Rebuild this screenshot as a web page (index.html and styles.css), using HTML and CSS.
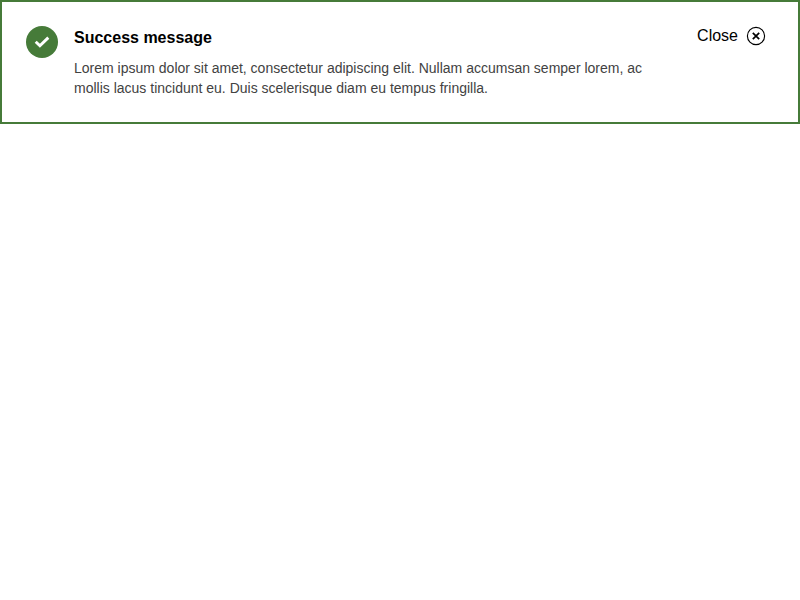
FILE: index.html
```html
<!DOCTYPE html>
<html lang="en">
<head>
<meta charset="utf-8">
<title>Success message</title>
<link rel="stylesheet" href="styles.css">
</head>
<body>
<section class="message" role="status">
  <span class="message-icon">
    <svg width="16" height="16" viewBox="0 0 16 16" aria-hidden="true"><path d="M1.7 7.7 L5.9 11.8 L14.3 3.6" fill="none" stroke="#fff" stroke-width="2.9"/></svg>
  </span>
  <div class="message-body">
    <h2 class="message-title">Success message</h2>
    <p class="message-text">Lorem ipsum dolor sit amet, consectetur adipiscing elit. Nullam accumsan semper lorem, ac mollis lacus tincidunt eu. Duis scelerisque diam eu tempus fringilla.</p>
  </div>
  <button class="message-close" type="button">
    <span>Close</span>
    <svg width="20" height="20" viewBox="0 0 20 20" aria-hidden="true"><circle cx="10" cy="10" r="8.6" fill="none" stroke="#000" stroke-width="1.15"/><path d="M6.8 6.8 L13.2 13.2 M13.2 6.8 L6.8 13.2" stroke="#000" stroke-width="1.7"/></svg>
  </button>
</section>
</body>
</html>
```
FILE: styles.css
```css
body {
  margin: 0;
  background: #fff;
  font-family: "Liberation Sans", Arial, sans-serif;
}

.message {
  box-sizing: border-box;
  display: flex;
  align-items: flex-start;
  height: 124px;
  padding: 24px;
  border: 2px solid #467b39;
}

.message-icon {
  display: flex;
  flex: none;
  align-items: center;
  justify-content: center;
  width: 32px;
  height: 32px;
  margin-right: 16px;
  border-radius: 50%;
  background: #467b39;
}

.message-body {
  width: 583px;
  flex: none;
}

.message-title {
  margin: 0 0 8px;
  font-size: 16px;
  line-height: 24px;
  color: #000;
}

.message-text {
  margin: 0;
  font-size: 14px;
  line-height: 20px;
  color: #424242;
}

.message-close {
  display: flex;
  align-items: center;
  gap: 8px;
  height: 20px;
  margin-left: auto;
  margin-right: 8px;
  padding: 0;
  border: 0;
  background: none;
  font: 16px/20px "Liberation Sans", Arial, sans-serif;
  color: #000;
}
```
